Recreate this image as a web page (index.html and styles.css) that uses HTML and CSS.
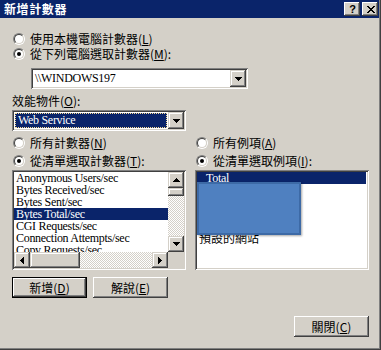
FILE: index.html
```html
<!DOCTYPE html>
<html lang="zh-Hant">
<head>
<meta charset="utf-8">
<title>新增計數器</title>
<link rel="stylesheet" href="styles.css">
</head>
<body>
<div class="window">
  <div class="titlebar">
    <span class="title">新增計數器</span>
    <div class="caption-btns">
      <span class="cbtn help">?</span>
      <span class="cbtn close"><svg width="8" height="7" viewBox="0 0 8 7"><path d="M0 0h2v1h1v1h2v-1h1v-1h2v1h-1v1h-1v1h-1v1h1v1h1v1h1v1h-2v-1h-1v-1h-2v1h-1v1h-2v-1h1v-1h1v-1h1v-1h-1v-1h-1v-1h-1z"/></svg></span>
    </div>
  </div>
  <div class="content">
    <div class="radio-row"><span class="radio"></span><span>使用本機電腦計數器(<u>L</u>)</span></div>
    <div class="radio-row"><span class="radio checked"></span><span>從下列電腦選取計數器(<u>M</u>):</span></div>
    <div class="combo machine">
      <span class="combo-text latin">\\WINDOWS197</span>
      <span class="drop-btn"><svg width="7" height="4" viewBox="0 0 7 4"><path d="M0 0h7v1h-1v1h-1v1h-1v1h-1v-1h-1v-1h-1v-1h-1z"/></svg></span>
    </div>
    <div class="field-label">效能物件(<u>O</u>):</div>
    <div class="combo object">
      <span class="combo-text latin selected-field">Web Service</span>
      <span class="drop-btn"><svg width="7" height="4" viewBox="0 0 7 4"><path d="M0 0h7v1h-1v1h-1v1h-1v1h-1v-1h-1v-1h-1v-1h-1z"/></svg></span>
    </div>
    <div class="columns">
      <div class="col">
        <div class="radio-row"><span class="radio"></span><span>所有計數器(<u>N</u>)</span></div>
        <div class="radio-row"><span class="radio checked"></span><span>從清單選取計數器(<u>T</u>):</span></div>
        <div class="listbox scrolled">
          <ul class="items latin">
            <li>Anonymous Users/sec</li>
            <li>Bytes Received/sec</li>
            <li>Bytes Sent/sec</li>
            <li class="sel">Bytes Total/sec</li>
            <li>CGI Requests/sec</li>
            <li>Connection Attempts/sec</li>
            <li>Copy Requests/sec</li>
            <li>Current Anonymous Users</li>
          </ul>
          <div class="vscroll">
            <span class="sbtn"><svg width="7" height="4" viewBox="0 0 7 4"><path d="M3 0h1v1h1v1h1v1h1v1h-7v-1h1v-1h1v-1h1z"/></svg></span>
            <span class="thumb v"></span>
            <span class="track"></span>
            <span class="sbtn"><svg width="7" height="4" viewBox="0 0 7 4"><path d="M0 0h7v1h-1v1h-1v1h-1v1h-1v-1h-1v-1h-1v-1h-1z"/></svg></span>
          </div>
          <div class="hscroll">
            <span class="sbtn"><svg width="4" height="7" viewBox="0 0 4 7"><path d="M3 0h1v7h-1v-1h-1v-1h-1v-1h-1v-1h1v-1h1v-1h1z"/></svg></span>
            <span class="thumb h"></span>
            <span class="track"></span>
            <span class="sbtn"><svg width="4" height="7" viewBox="0 0 4 7"><path d="M0 0h1v1h1v1h1v1h1v1h-1v1h-1v1h-1v1h-1z"/></svg></span>
          </div>
          <div class="corner"></div>
        </div>
      </div>
      <div class="col">
        <div class="radio-row"><span class="radio"></span><span>所有例項(<u>A</u>)</span></div>
        <div class="radio-row"><span class="radio checked"></span><span>從清單選取例項(<u>I</u>):</span></div>
        <div class="listbox plain">
          <ul class="items">
            <li class="sel latin total">Total</li>
            <li></li>
            <li></li>
            <li></li>
            <li></li>
            <li>預設的網站</li>
          </ul>
          <div class="redact"></div>
        </div>
      </div>
    </div>
    <div class="btn-row">
      <span class="button default"><span class="button-face">新增(<u>D</u>)</span></span>
      <span class="button"><span class="button-face">解說(<u>E</u>)</span></span>
    </div>
    <div class="close-row">
      <span class="button"><span class="button-face">關閉(<u>C</u>)</span></span>
    </div>
  </div>
</div>
</body>
</html>
```
FILE: styles.css
```css
* { box-sizing: border-box; }
html, body { margin: 0; padding: 0; }
body {
  width: 381px;
  height: 350px;
  overflow: hidden;
  background: #d4d0c8;
  font-family: "Noto Sans CJK TC", "Noto Sans", sans-serif;
  font-size: 12px;
  color: #000;
}
u { text-decoration: underline; text-underline-offset: 1px; }
.latin { font-family: "Liberation Serif", "Noto Sans CJK TC", serif; letter-spacing: -0.3px; }

.window {
  width: 381px;
  height: 350px;
  background: #d4d0c8;
  border-right: 1px solid #404040;
  border-bottom: 1px solid #404040;
  box-shadow: inset -1px -1px 0 #808080;
  display: flex;
  flex-direction: column;
}

.titlebar {
  height: 18px;
  margin-right: 1px;
  background: #0a246a;
  display: flex;
  align-items: flex-start;
  justify-content: space-between;
  flex: none;
}
.title {
  color: #fff;
  font-weight: bold;
  font-size: 12px;
  line-height: 18px;
  padding-left: 4px;
  letter-spacing: 0.6px;
}
.caption-btns { display: flex; gap: 2px; margin-top: 2px; margin-right: 1px; }
.cbtn {
  width: 16px;
  height: 14px;
  background: #d4d0c8;
  box-shadow: inset -1px -1px #404040, inset 1px 1px #fff, inset -2px -2px #808080, inset 2px 2px #d4d0c8;
  display: flex;
  align-items: center;
  justify-content: center;
}
.cbtn.help {
  font-family: "Liberation Sans", sans-serif;
  font-weight: bold;
  font-size: 11px;
  line-height: 14px;
  padding-left: 1px;
}
.cbtn.close svg { margin-left: 1px; }

.content {
  flex: 1;
  padding: 13px 11px 0 12px;
  display: flex;
  flex-direction: column;
}

.radio-row {
  display: flex;
  align-items: center;
  gap: 5px;
  height: 15px;
  padding-left: 1px;
  line-height: 15px;
  white-space: nowrap;
}
.radio {
  width: 12px;
  height: 12px;
  border-radius: 50%;
  border: 1px solid;
  border-color: #808080 #fff #fff #808080;
  position: relative;
  flex: none;
}
.radio::before {
  content: "";
  position: absolute;
  inset: 0;
  border-radius: 50%;
  border: 1px solid;
  border-color: #404040 #d4d0c8 #d4d0c8 #404040;
  background: #fff;
}
.radio.checked::after {
  content: "";
  position: absolute;
  left: 3px;
  top: 3px;
  width: 4px;
  height: 4px;
  border-radius: 50%;
  background: #000;
}

.combo {
  height: 21px;
  padding: 2px;
  background: #fff;
  box-shadow: inset 1px 1px #808080, inset -1px -1px #fff, inset 2px 2px #404040, inset -2px -2px #d4d0c8;
  display: flex;
  align-items: stretch;
}
.combo.machine { width: 217px; margin: 7px 0 0 19px; }
.combo.object { width: 174px; margin-top: 3px; }
.combo-text {
  flex: 1;
  font-size: 12px;
  line-height: 17px;
  padding-left: 2px;
  white-space: nowrap;
}
.combo-text.selected-field {
  margin: 1px;
  background: #0a246a;
  color: #fff;
  outline: 1px dotted #f5db95;
  outline-offset: -1px;
  line-height: 15px;
  padding-left: 3px;
}
.drop-btn {
  width: 16px;
  flex: none;
  background: #d4d0c8;
  box-shadow: inset -1px -1px #404040, inset 1px 1px #d4d0c8, inset -2px -2px #808080, inset 2px 2px #fff;
  display: flex;
  align-items: center;
  justify-content: center;
}

.field-label { margin-top: 5px; height: 13px; line-height: 13px; white-space: nowrap; }

.columns {
  display: grid;
  grid-template-columns: 174px 174px;
  column-gap: 9px;
  margin-top: 4px;
}
.col { display: flex; flex-direction: column; gap: 3px; }
.col .listbox { margin-top: -1px; }

.listbox {
  height: 100px;
  padding: 2px;
  background: #fff;
  box-shadow: inset 1px 1px #808080, inset -1px -1px #fff, inset 2px 2px #404040, inset -2px -2px #d4d0c8;
  position: relative;
}
.listbox.scrolled {
  display: grid;
  grid-template-columns: 1fr 16px;
  grid-template-rows: 1fr 16px;
}
.items {
  list-style: none;
  margin: 0;
  padding: 0;
  overflow: hidden;
  min-width: 0;
}
.items li {
  height: 12px;
  line-height: 12px;
  padding-left: 2px;
  white-space: nowrap;
  font-size: 12px;
}
.items li.sel { background: #0a246a; color: #fff; }
.items li.total { padding-left: 9px; }
.listbox.plain .items li { margin: 0 1px 0 0; }

.vscroll, .hscroll {
  display: flex;
  background: repeating-conic-gradient(#fff 0 25%, #d4d0c8 0 50%) 0 0 / 2px 2px;
}
.vscroll { flex-direction: column; grid-row: 1; grid-column: 2; }
.hscroll { flex-direction: row; grid-row: 2; grid-column: 1; }
.corner { grid-row: 2; grid-column: 2; background: #d4d0c8; }
.sbtn, .thumb {
  flex: none;
  background: #d4d0c8;
  box-shadow: inset -1px -1px #404040, inset 1px 1px #d4d0c8, inset -2px -2px #808080, inset 2px 2px #fff;
  display: flex;
  align-items: center;
  justify-content: center;
}
.vscroll .sbtn { height: 16px; }
.hscroll .sbtn { width: 16px; }
.thumb.v { height: 8px; }
.thumb.h { width: 50px; }
.track { flex: 1; }

.redact {
  position: absolute;
  left: 2px;
  top: 12px;
  width: 104px;
  height: 53px;
  background: #4f80c0;
  border: 2px solid #3d6aa6;
  box-shadow: 1px 1px 2px rgba(0, 0, 0, 0.35);
}

.btn-row { display: flex; gap: 6px; margin-top: 7px; }
.close-row { display: flex; justify-content: flex-end; margin-top: 18px; }
.button {
  width: 75px;
  height: 21px;
  display: flex;
}
.button-face {
  flex: 1;
  display: flex;
  align-items: center;
  justify-content: center;
  background: #d4d0c8;
  box-shadow: inset -1px -1px #404040, inset 1px 1px #fff, inset -2px -2px #808080, inset 2px 2px #d4d0c8;
  line-height: 12px;
  white-space: nowrap;
}
.button.default { border: 1px solid #000; }
```
